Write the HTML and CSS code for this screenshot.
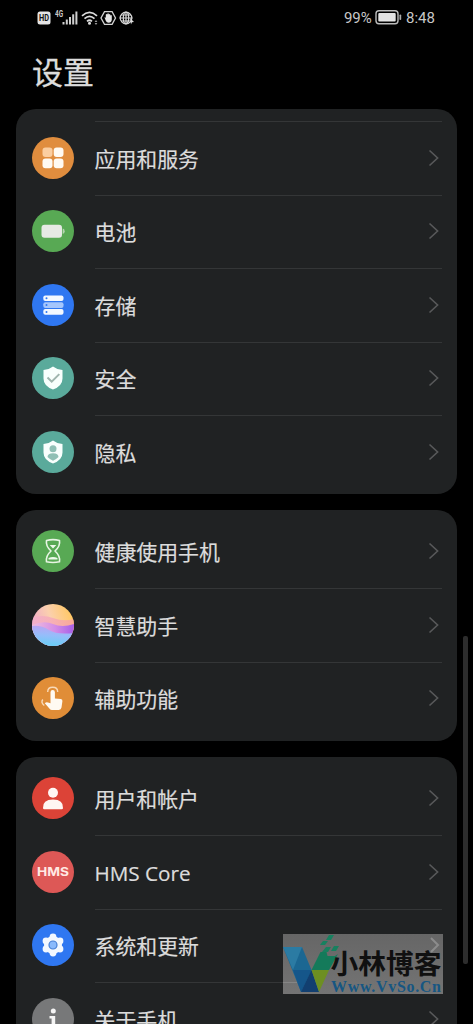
FILE: index.html
```html
<!DOCTYPE html>
<html lang="zh-CN">
<head>
<meta charset="utf-8">
<title>设置</title>
<link rel="stylesheet" href="styles.css">
</head>
<body>
<svg class="defs" width="0" height="0" aria-hidden="true">
  <symbol id="chevron" viewBox="0 0 12 18"><path d="M1.500 1.500 9.600 9 1.500 16.500" fill="none" stroke="#58595a" stroke-width="1.600"/></symbol>
  <symbol id="shield" viewBox="0 0 42 42"><path d="M21 9.400Q25 12.600 30.500 13V21.500Q30.500 29 21 32.500 11.500 29 11.500 21.500V13Q17 12.600 21 9.400Z" fill="#f8fffd"/></symbol>
</svg>
<div class="phone">
  <header class="status">
    <svg class="signals" width="98" height="18" viewBox="0 0 98 18">
      <rect x="0.500" y="2.500" width="13" height="13" rx="2.500" fill="#e4e4e4"/>
      <text x="2" y="12.200" class="hd" textLength="10" lengthAdjust="spacingAndGlyphs">HD</text>
      <text x="18" y="8" class="net" textLength="8" lengthAdjust="spacingAndGlyphs">4G</text>
      <g fill="#cfcfcf"><rect x="25.500" y="13" width="2" height="2.500"/><rect x="28.800" y="10.500" width="2" height="5"/><rect x="32" y="8" width="2" height="7.500"/><rect x="35.200" y="5.300" width="2" height="10.200"/><rect x="38.400" y="2.500" width="2" height="13"/></g>
      <g fill="none" stroke="#dcdcdc" stroke-width="1.700"><path d="M45 6.800Q52.500 0 60 6.800M47.500 9.700Q52.500 5 57.500 9.700M50 12.300Q52.500 10.200 55 12.300"/></g>
      <circle cx="52.500" cy="14.300" r="1.500" fill="#ddd"/><path d="m59 11 1.400 2h-2.800zm0 5 1.400-2h-2.800z" fill="#999"/>
      <path d="M67.500 2.700h7.600L78.500 9l-3.400 6.400h-7.600L64 9Z" fill="none" stroke="#d2d2d2" stroke-width="1.300"/>
      <path d="M67.500 8.500q.8-.6 1.300.4V5.500q.8-.8 1.500 0V4.700q.8-.8 1.500 0v.8q.8-.8 1.500 0v1q.8-.8 1.500 0v4.300q-.3 3-3.200 3-2 0-2.700-1.800Z" fill="#e4e4e4"/>
      <g fill="none" stroke="#d8d8d8" stroke-width="1.200"><circle cx="89" cy="9" r="5.800"/><ellipse cx="89" cy="9" rx="2.700" ry="5.800"/><path d="M82.500 9h13M84 6h10M84 12h9M89 3v12"/></g>
      <path d="m93 9 4 4-2 .3-1 2.200Z" fill="#ddd"/>
    </svg>
    <div class="right">
      <span class="percent">99%</span>
      <svg width="27" height="16" viewBox="0 0 27 16"><rect x="1" y="1.700" width="22" height="13" rx="3" fill="none" stroke="#bcbcbc" stroke-width="1.400"/><rect x="3.300" y="4" width="17.400" height="8.400" rx="1" fill="#e3e3e3"/><rect x="24.500" y="5.500" width="1.700" height="5.500" rx=".8" fill="#aaa"/></svg>
      <span class="time">8:48</span>
    </div>
  </header>
  <h1>设置</h1>

  <main>
    <section class="card first">
      <div class="row line"><svg class="icon" viewBox="0 0 42 42"><circle cx="21" cy="21" r="21" fill="#e08d3e"/><rect x="10.500" y="10.500" width="10" height="9.600" rx="3" fill="#fbcea0"/><g fill="#fffaf2"><rect x="21.700" y="10.500" width="9.800" height="9.600" rx="3"/><rect x="10.500" y="21.600" width="10" height="9.600" rx="3"/><rect x="21.700" y="21.600" width="9.800" height="9.600" rx="3"/></g></svg><span class="label">应用和服务</span><svg class="go"><use href="#chevron"/></svg></div>
      <div class="row line"><svg class="icon" viewBox="0 0 42 42"><circle cx="21" cy="21" r="21" fill="#58a954"/><rect x="9.500" y="14.700" width="20.500" height="13" rx="3" fill="#e6eae4"/><path d="M30.700 18.500q2 0 2 2.700t-2 2.700Z" fill="#b5d4b0"/></svg><span class="label">电池</span><svg class="go"><use href="#chevron"/></svg></div>
      <div class="row line"><svg class="icon" viewBox="0 0 42 42"><circle cx="21" cy="21" r="21" fill="#2f77f1"/><rect x="11.300" y="11.500" width="20.200" height="5.600" rx="2" fill="#f3f8ff"/><rect x="11.300" y="18.300" width="20.200" height="5.600" rx="2" fill="#a5c6fc"/><rect x="11.300" y="25.100" width="20.200" height="5.600" rx="2" fill="#f3f8ff"/><g fill="#2f77f1"><circle cx="14.500" cy="14.300" r="1"/><circle cx="14.500" cy="21.100" r="1"/><circle cx="14.500" cy="27.900" r="1"/></g></svg><span class="label">存储</span><svg class="go"><use href="#chevron"/></svg></div>
      <div class="row line"><svg class="icon" viewBox="0 0 42 42"><circle cx="21" cy="21" r="21" fill="#5aaa9b"/><use href="#shield"/><path d="m15.500 20.500 4.200 4.200 7.600-7.600" fill="none" stroke="#9fb5ae" stroke-width="2"/></svg><span class="label">安全</span><svg class="go"><use href="#chevron"/></svg></div>
      <div class="row line"><svg class="icon" viewBox="0 0 42 42"><circle cx="21" cy="21" r="21" fill="#5aaa9b"/><use href="#shield"/><circle cx="21" cy="17.800" r="3.500" fill="#8fc0b5"/><path d="M15.500 26q0-3.800 5.500-3.800t5.500 3.800q-2.500 2.500-5.500 3.700-3-1.200-5.500-3.700Z" fill="#8fc0b5"/></svg><span class="label">隐私</span><svg class="go"><use href="#chevron"/></svg></div>
    </section>

    <section class="card">
      <div class="row"><svg class="icon" viewBox="0 0 42 42"><circle cx="21" cy="21" r="21" fill="#58a954"/><path d="M14.500 10.500Q21 8.800 27.500 10.500 28.500 16 23 21q5.500 5 4.500 10.800Q21 33.200 14.500 31.800 13.500 26 19 21q-5.500-5-4.500-10.500Z" fill="none" stroke="#e8f5e4" stroke-width="1.600" stroke-linejoin="round"/><path d="M17.700 15h6.600L21 18.500ZM16.500 28q4.500-2.200 9 0v1.500h-9Z" fill="#eef8ea"/></svg><span class="label">健康使用手机</span><svg class="go"><use href="#chevron"/></svg></div>
      <div class="row line"><svg class="icon" viewBox="0 0 42 42"><defs><linearGradient id="sky" x1="0" y1=".5" x2=".9" y2=".2"><stop stop-color="#efa9c8"/><stop offset=".5" stop-color="#fbd0ae"/><stop offset="1" stop-color="#ffc868"/></linearGradient><linearGradient id="sea" x1=".3" y1="0" x2=".2" y2="1"><stop stop-color="#b9a5f4"/><stop offset=".45" stop-color="#96bdfa"/><stop offset="1" stop-color="#65cff5"/></linearGradient><linearGradient id="wave" x1="0" y1="0" x2="1" y2="0"><stop stop-color="#f0bedd"/><stop offset=".55" stop-color="#d38de6"/><stop offset="1" stop-color="#a65ee8"/></linearGradient><linearGradient id="rose" x1="0" y1="0" x2="1" y2="0"><stop stop-color="#f3b0cc"/><stop offset="1" stop-color="#f9a0a2"/></linearGradient><clipPath id="orb"><circle cx="21" cy="21" r="21"/></clipPath></defs><g clip-path="url(#orb)"><path d="M0 0h42v42H0Z" fill="url(#sky)"/><path d="M0 14q10-4 21 0t21 1v12H0Z" fill="url(#rose)" opacity=".8"/><path d="M0 21q12-5 21-1t21 0v22H0Z" fill="url(#wave)"/><path d="M0 22q9-1 17 4t25 3v13H0Z" fill="url(#sea)"/></g></svg><span class="label">智慧助手</span><svg class="go"><use href="#chevron"/></svg></div>
      <div class="row line"><svg class="icon" viewBox="0 0 42 42"><circle cx="21" cy="21" r="21" fill="#e08d37"/><path d="M18.500 15.200q0-2.200 2.200-2.200t2.200 2.200v6.200l6 .6q1.800.4 1.500 2.300l-.9 6.300q-.4 2.400-2.700 2.400H20q-1.500 0-2.400-1.200l-4.800-5.600q1.500-1.600 3.200-.8l2.500.8Z" fill="#fffaf2"/><path d="M15.700 15q0-4.700 5-4.700t5 4.700M10.800 22.500q-2.300 3 1.500 6" fill="none" stroke="#f8d9b7" stroke-width="1.400"/></svg><span class="label">辅助功能</span><svg class="go"><use href="#chevron"/></svg></div>
    </section>

    <section class="card">
      <div class="row"><svg class="icon" viewBox="0 0 42 42"><circle cx="21" cy="21" r="21" fill="#dc4337"/><circle cx="21" cy="15.700" r="5" fill="#fff6f3"/><path d="M11 31q-.5-8.500 10-8.500T31 31q0 1.300-1.300 1.300H12.300Q11 32.300 11 31Z" fill="#fff6f3"/></svg><span class="label">用户和帐户</span><svg class="go"><use href="#chevron"/></svg></div>
      <div class="row line"><svg class="icon" viewBox="0 0 42 42"><circle cx="21" cy="21" r="21" fill="#dd5856"/><text x="5" y="25.300" class="hms" textLength="32" lengthAdjust="spacingAndGlyphs">HMS</text></svg><span class="label latin">HMS Core</span><svg class="go"><use href="#chevron"/></svg></div>
      <div class="row line"><svg class="icon" viewBox="0 0 42 42"><circle cx="21" cy="21" r="21" fill="#2f77f1"/><g fill="#f3f8ff"><circle cx="21" cy="21" r="9"/><circle cx="21" cy="13" r="3.400"/><circle cx="28" cy="17" r="3.400"/><circle cx="28" cy="25" r="3.400"/><circle cx="21" cy="29" r="3.400"/><circle cx="14" cy="25" r="3.400"/><circle cx="14" cy="17" r="3.400"/></g><circle cx="21" cy="21" r="4" fill="#8abafc" stroke="#477fd4" stroke-width="1.200"/></svg><span class="label">系统和更新</span><svg class="go"><use href="#chevron"/></svg></div>
      <div class="row line"><svg class="icon" viewBox="0 0 42 42"><circle cx="21" cy="21" r="21" fill="#777879"/><circle cx="21.300" cy="13" r="2.500" fill="#f5f5f5"/><path d="M17.500 18h5.700v13h-3.600V20.500h-2.100ZM17 29h9v3h-9Z" fill="#f5f5f5"/></svg><span class="label">关于手机</span><svg class="go"><use href="#chevron"/></svg></div>
    </section>
  </main>
  <div class="scrollbar"></div>
  <svg class="watermark" viewBox="0 0 160 60">
    <defs><linearGradient id="plate" x1="0" y1="0" x2="0" y2="1"><stop stop-color="#666"/><stop offset="1" stop-color="#747474"/></linearGradient></defs>
    <path d="M0 0h160v60H0Z" fill="url(#plate)"/>
    <path d="m148 4 7 7-7 7" fill="none" stroke="#8c8c8c" stroke-width="2"/>
    <path d="M0 48.500h18" stroke="#858585"/>
    <path d="M0 13h19l9.500 23L36 58H18Z" fill="#1b6792"/><path d="M0 13h19l-9 23Z" fill="#2b7ba3"/><path d="M10 36h18.500L18 58Z" fill="#15568a"/><path d="M28.500 36 36 58H18Z" fill="#123f70"/>
    <path d="m28.500 36 9-18h6l1 4h7.500l3-2L46 36Z" fill="#147a5a"/><path d="M28.500 36H46L36 58Z" fill="#6d8f22"/>
    <path d="M46 1h5l-3 5h-5ZM40 7h5l-3 4h-5ZM51 12h5l-3 5h-5ZM43 13h5l-3 5h-6Z" fill="#17805f"/>
    <text x="47.500" y="40" class="blog" textLength="111" lengthAdjust="spacingAndGlyphs">小林博客</text>
    <text x="48" y="58" class="site" textLength="110" lengthAdjust="spacing">Www.VvSo.Cn</text>
  </svg>
</div>
</body>
</html>
```
FILE: styles.css
```css
* { box-sizing: border-box; }
body { margin: 0; background: #000; }
.defs { position: absolute; }
.phone {
  position: relative;
  width: 473px;
  height: 1024px;
  overflow: hidden;
  background: #000;
  color: #dcdcdc;
  font-family: "Noto Sans CJK SC", sans-serif;
}
.status {
  display: flex;
  justify-content: space-between;
  height: 36px;
  padding: 9px 37px 0 37px;
  font: 15px/18px Roboto, sans-serif;
  color: #c8c8c8;
}
.right { display: flex; }
.percent { width: 31px; letter-spacing: -0.1px; }
.time { width: 30px; margin-left: 4px; white-space: nowrap; }
.hd { font: bold 8.500px Roboto, sans-serif; fill: #111; }
.net { font: bold 8.500px Roboto, sans-serif; fill: #ccc; }
h1 {
  height: 73px;
  margin: 0;
  padding: 12px 0 0 32px;
  font-size: 31px;
  line-height: 46px;
  font-weight: 400;
  -webkit-text-stroke: 0.3px #dcdcdc;
}
main { display: flex; flex-direction: column; gap: 16px; padding: 0 16px; }
.card {
  flex: none;
  padding: 5px 15px 5.500px;
  border-radius: 20px;
  background: #202223;
}
.card.first { padding-top: 12px; padding-bottom: 5px; }
.row {
  display: flex;
  align-items: center;
  height: 73.500px;
  background: linear-gradient(#343637, #343637) 64px 0 / 347px 0 no-repeat;
}
.row.line { background-size: 347px 1px; }
.icon { flex: none; width: 42px; height: 42px; margin-left: 0.500px; }
.label {
  flex: 1;
  margin-left: 21px;
  font-size: 20.900px;
  line-height: 30px;
  -webkit-text-stroke: 0.2px #dcdcdc;
}
.latin { padding-top: 2px; font-family: "Open Sans", sans-serif; font-size: 20.700px; }
.go { width: 12px; height: 18px; margin-right: 2px; }
.hms { font: bold 12px Inter, sans-serif; fill: #ffe9e3; }
.scrollbar {
  position: absolute;
  right: 5px;
  top: 636px;
  width: 5px;
  height: 328px;
  border-radius: 2px;
  background: #2d2d2d;
}
.watermark { position: absolute; left: 283px; top: 934px; width: 160px; height: 60px; }
.blog { font: bold 27px "Noto Sans CJK SC", sans-serif; fill: #101010; }
.site { font: bold 16px "Liberation Serif", serif; fill: #165682; }
```
